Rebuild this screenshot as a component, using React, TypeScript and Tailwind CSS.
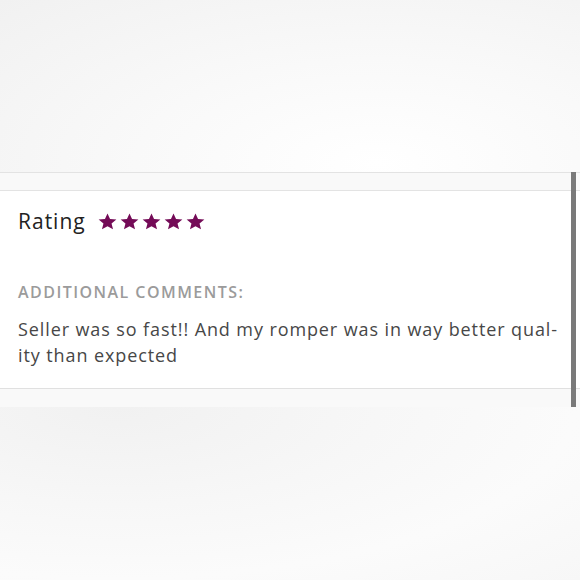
import React from 'react';

function Star() {
  return (
    <svg width="19" height="17" viewBox="0 0 24 23" preserveAspectRatio="none" className="shrink-0">
      <path
        d="M12 0.8l3.2 7.4 8 0.7-6.1 5.3 1.9 7.9L12 17.9l-7 4.2 1.9-7.9L0.8 8.9l8-0.7z"
        fill="#740b57"
      />
    </svg>
  );
}

export default function App() {
  return (
    <div className="relative w-[580px] h-[580px] overflow-hidden bg-[#f6f6f6] font-['Open_Sans','Lato',sans-serif]">
      {/* page above the card */}
      <div className="h-[172px] bg-[radial-gradient(ellipse_at_65%_95%,#ffffff_0%,#f9f9f9_45%,#f1f1f1_100%)]" />

      {/* header strip */}
      <div className="h-[19px] border-t border-b border-[#e3e3e3] bg-[#f9f9f9]" />

      {/* review card */}
      <div className="bg-white h-[197px] px-[18px] pt-[16px] pr-[20px]">
        <div className="flex items-center gap-[12px] h-[28px]">
          <span className="text-[21px] leading-none tracking-[1px] text-[#222]">Rating</span>
          <div className="flex items-center gap-[3px] pt-[1px]">
            <Star />
            <Star />
            <Star />
            <Star />
            <Star />
          </div>
        </div>

        <div className="mt-[47px] text-[16px] leading-[20px] font-semibold tracking-[1.45px] text-[#9b9b9b] uppercase">
          Additional comments:
        </div>

        <p className="mt-[14px] text-[18px] leading-[26px] tracking-[0.9px] text-[#474747] whitespace-nowrap">
          Seller was so fast!! And my romper was in way better qual-
          <br />
          ity than expected
        </p>
      </div>

      {/* footer strip */}
      <div className="h-[19px] border-t border-[#e0e0e0] bg-[#f9f9f9]" />

      {/* page below the card */}
      <div className="h-[173px] bg-[radial-gradient(ellipse_at_20%_0%,#f1f1f1_0%,#f7f7f7_40%,#fbfbfb_70%,#f7f7f7_100%)]" />

      {/* scrollbar thumb */}
      <div className="absolute left-[571px] top-[172px] w-[5px] h-[235px] bg-[#7a7a7a]" />
    </div>
  );
}
